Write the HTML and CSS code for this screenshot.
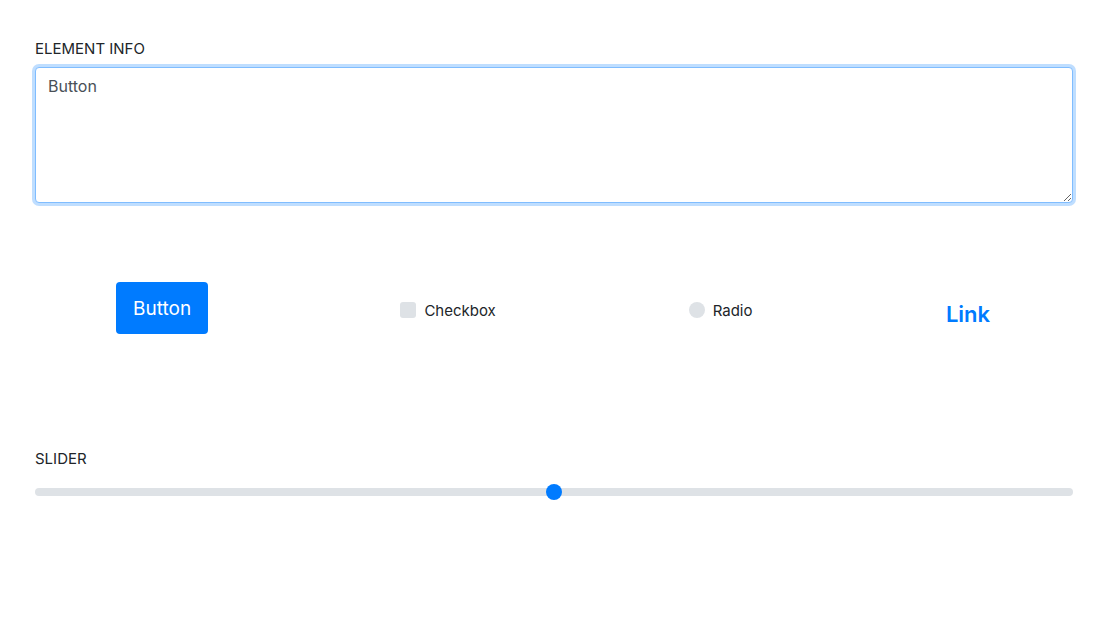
FILE: index.html
```html
<!DOCTYPE html>
<html lang="en">
<head>
<meta charset="utf-8">
<title>Elements</title>
<link rel="stylesheet" href="styles.css">
</head>
<body>
<main class="panel">
  <section class="field">
    <label class="field-label" for="info">ELEMENT INFO</label>
    <textarea id="info" class="info-box" autofocus>Button</textarea>
  </section>

  <section class="controls">
    <button class="btn" type="button">Button</button>
    <label class="choice choice-check"><span class="box"></span><span>Checkbox</span></label>
    <label class="choice choice-radio"><span class="dot"></span><span>Radio</span></label>
    <a class="link" href="#">Link</a>
  </section>

  <section class="field slider-field">
    <label class="field-label" for="slider">SLIDER</label>
    <input id="slider" class="range" type="range" min="0" max="100" value="50">
  </section>
</main>
</body>
</html>
```

FILE: styles.css
```css
html, body {
  margin: 0;
  background: #ffffff;
}

body {
  font-family: Inter, "Liberation Sans", "DejaVu Sans", sans-serif;
  color: #212529;
}

.panel {
  padding: 38px 35px 0;
  display: flex;
  flex-direction: column;
}

.field {
  display: flex;
  flex-direction: column;
}

.field-label {
  font-size: 15px;
  line-height: 21px;
  margin-bottom: 8px;
  color: #212529;
}

.info-box {
  box-sizing: border-box;
  width: 100%;
  height: 136px;
  margin: 0;
  padding: 6px 12px;
  font-family: Inter, "Liberation Sans", sans-serif;
  font-size: 16px;
  line-height: 24px;
  color: #495057;
  border: 1px solid #80bdff;
  border-radius: 4px;
  box-shadow: 0 0 0 3px rgba(0, 123, 255, 0.25);
  outline: none;
  resize: vertical;
}

.controls {
  display: flex;
  justify-content: space-around;
  align-items: center;
  height: 52px;
  margin: 79px -15px 0;
}

.btn {
  width: 92px;
  height: 52px;
  padding: 0;
  border: none;
  border-radius: 4px;
  background: #007bff;
  color: #ffffff;
  font-family: Inter, "Liberation Sans", sans-serif;
  font-size: 19px;
  cursor: pointer;
}

.choice {
  display: flex;
  align-items: center;
  gap: 8px;
  font-size: 15px;
  color: #212529;
  margin-top: 4px;
}

.choice-check { width: 96px; }
.choice-radio { width: 65px; }

.box, .dot {
  flex: none;
  width: 16px;
  height: 16px;
  background: #dee2e6;
}

.box { border-radius: 3px; }
.dot { border-radius: 50%; }

.link {
  width: 46px;
  margin-top: 11px;
  font-size: 22px;
  font-weight: 600;
  color: #007bff;
  text-decoration: none;
}

.slider-field {
  margin-top: 114px;
}

.slider-field .field-label {
  margin-bottom: 15px;
}

.range {
  -webkit-appearance: none;
  appearance: none;
  width: 100%;
  height: 16px;
  margin: 0;
  background: transparent;
}

.range::-webkit-slider-runnable-track {
  height: 8px;
  border-radius: 4px;
  background: #dee2e6;
}

.range::-webkit-slider-thumb {
  -webkit-appearance: none;
  width: 16px;
  height: 16px;
  margin-top: -4px;
  border: none;
  border-radius: 50%;
  background: #007bff;
}

.range::-moz-range-track {
  height: 8px;
  border-radius: 4px;
  background: #dee2e6;
}

.range::-moz-range-thumb {
  width: 16px;
  height: 16px;
  border: none;
  border-radius: 50%;
  background: #007bff;
}
```
